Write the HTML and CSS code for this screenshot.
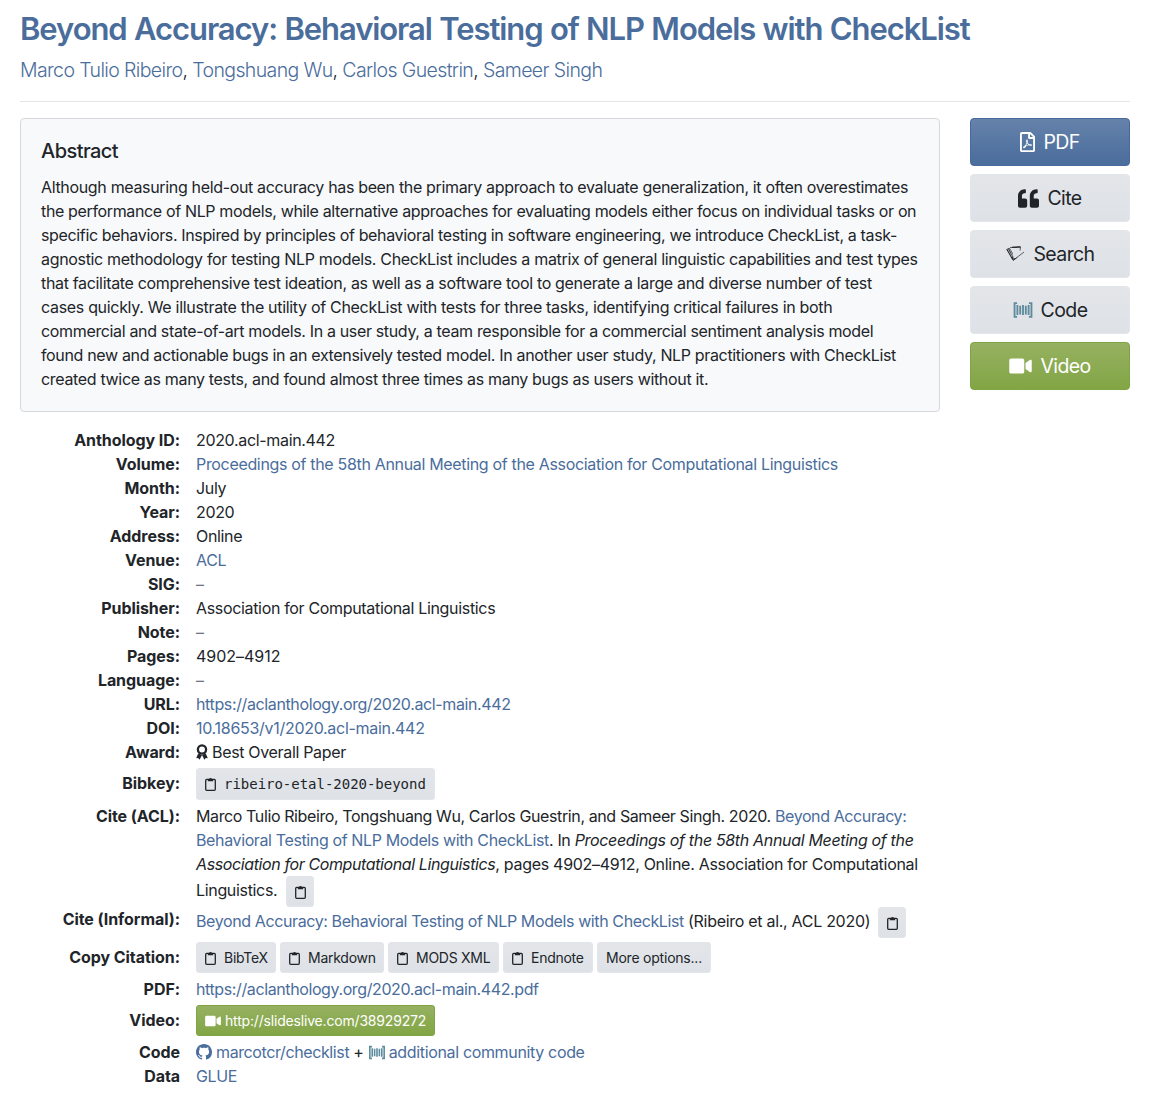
FILE: index.html
```
<!DOCTYPE html>
<html lang="en">
<head>
<meta charset="utf-8">
<title>Beyond Accuracy: Behavioral Testing of NLP Models with CheckList - ACL Anthology</title>
<link rel="stylesheet" href="styles.css">
</head>
<body>
<svg class="sprite" aria-hidden="true">
<symbol id="clip" viewBox="0 0 11 14"><rect x=".7" y="2.400" width="9.600" height="10.900" rx="1" fill="none" stroke="currentColor" stroke-width="1.300"/><path d="M2.800 4.300V2.500h1.100a1.600 1.600 0 0 1 3.200 0h1.100v1.800z"/></symbol>
<symbol id="pdf" viewBox="0 0 384 512"><path d="M369.9 97.900L286 14C277 5 264.800-.1 252.100-.1H48C21.500 0 0 21.500 0 48v416c0 26.500 21.500 48 48 48h288c26.500 0 48-21.500 48-48V131.900c0-12.700-5.100-25-14.100-34zM332.100 128H256V51.900l76.100 76.100zM48 464V48h160v104c0 13.300 10.700 24 24 24h104v288H48zm250.200-143.700c-12.200-12-47-8.700-64.400-6.500-17.200-10.500-28.700-25-36.800-46.300 3.900-16.100 10.100-40.600 5.400-56-4.200-26.200-37.800-23.600-42.600-5.900-4.400 16.100-.4 38.500 7 67.100-10 23.900-24.900 56-35.400 74.400-20 10.300-47 26.200-51 46.200-3.300 15.800 26 55.200 76.100-31.200 22.400-7.400 46.800-16.500 68.400-20.100 18.900 10.200 41 17 55.800 17 25.500 0 28-28.200 17.500-38.700zm-198.100 77.800c5.100-13.700 24.500-29.500 30.400-35-19 30.300-30.400 35.700-30.400 35zm81.600-190.600c7.400 0 6.700 32.100 1.800 40.800-4.400-13.900-4.300-40.800-1.800-40.800zm-24.400 136.600c9.700-16.900 18-37 24.700-54.700 8.300 15.100 18.900 27.200 30.100 35.500-20.800 4.300-38.900 13.100-54.800 19.200zm131.600-5s-5 6-37.300-7.800c35.100-2.600 40.900 5.400 37.300 7.800z"/></symbol>
<symbol id="quote" viewBox="0 0 512 512"><path d="M464 256h-80v-64c0-35.300 28.700-64 64-64h8c13.300 0 24-10.700 24-24V56c0-13.300-10.700-24-24-24h-8c-88.400 0-160 71.600-160 160v240c0 26.500 21.500 48 48 48h128c26.500 0 48-21.500 48-48V304c0-26.500-21.500-48-48-48zm-288 0H96v-64c0-35.300 28.700-64 64-64h8c13.300 0 24-10.700 24-24V56c0-13.300-10.700-24-24-24h-8C71.600 32 0 103.600 0 192v240c0 26.500 21.500 48 48 48h128c26.500 0 48-21.500 48-48V304c0-26.500-21.500-48-48-48z"/></symbol>
<symbol id="video" viewBox="0 0 576 512"><path d="M336.200 64H47.800C21.400 64 0 85.400 0 111.800v288.400C0 426.600 21.400 448 47.800 448h288.400c26.400 0 47.800-21.400 47.800-47.800V111.800c0-26.400-21.400-47.800-47.800-47.800zm189.400 37.700L416 177.300v157.400l109.600 75.500c21.200 14.600 50.400-.3 50.400-25.800V127.500c0-25.400-29.100-40.400-50.400-25.800z"/></symbol>
<symbol id="pwc" viewBox="0 0 512 512"><path d="M88 128h48v256H88zM232 128h48v256h-48zM160 144h48v224h-48zM304 144h48v224h-48zM376 128h48v256h-48zM104 104V56H16v400h88v-48H64V104zM408 56v48h40v304h-40v48h88V56z"/></symbol>
<symbol id="github" viewBox="0 0 16 16"><path d="M8 0C3.580 0 0 3.580 0 8c0 3.540 2.290 6.530 5.470 7.590.4.070.55-.17.55-.38 0-.19-.01-.82-.01-1.490-2.010.37-2.530-.49-2.690-.94-.09-.23-.48-.94-.82-1.130-.28-.15-.68-.52-.01-.53.63-.01 1.080.58 1.230.82.72 1.210 1.870.87 2.330.66.07-.52.28-.87.51-1.070-1.780-.2-3.640-.89-3.640-3.950 0-.87.31-1.590.82-2.150-.08-.2-.36-1.020.08-2.120 0 0 .67-.21 2.200.82.64-.18 1.320-.27 2-.27s1.360.09 2 .27c1.530-1.040 2.200-.82 2.200-.82.44 1.100.16 1.920.08 2.120.51.56.82 1.270.82 2.150 0 3.070-1.870 3.750-3.650 3.950.29.25.54.73.54 1.480 0 1.070-.01 1.930-.01 2.200 0 .21.15.46.55.38A8.010 8.010 0 0 0 16 8c0-4.420-3.580-8-8-8z"/></symbol>
<symbol id="award" viewBox="0 0 12 16"><circle cx="6" cy="5.500" r="4.100" fill="none" stroke="currentColor" stroke-width="2.300"/><path d="M2.200 9.500L.2 14.200l2-.1L3.600 15.800 6 11l2.400 4.800 1.400-1.700 2 .1-2-4.700L6 11z"/></symbol>
<symbol id="scholar" viewBox="0 0 20 18"><path d="M5 2.500L15.500 2 15 5.500M19 7L8 15.500" fill="none" stroke="currentColor" stroke-width=".7"/><path d="M7 1.800l8.400-.5v1.200L7 3zM1.200 4.200L4.700 2.700l2.800 5L9 16 7.100 14.500zM8 15.800l5-3.500-4 1.200z"/><path d="M2.800 4.200l4.500 8M4.400 3.500L8 11" stroke="#e2e5e9" stroke-width=".7"/></symbol>
</svg>
<main>
<h2><a href="#">Beyond Accuracy: Behavioral Testing of NLP Models with CheckList</a></h2>
<p class="authors"><a href="#">Marco Tulio Ribeiro</a>, <a href="#">Tongshuang Wu</a>, <a href="#">Carlos Guestrin</a>, <a href="#">Sameer Singh</a></p>
<hr>
<div class="columns">
<div class="details">
<section class="abstract">
<h5>Abstract</h5>
<p><span>Although measuring held-out accuracy has been the primary approach to evaluate generalization, it often overestimates</span>
<span>the performance of NLP models, while alternative approaches for evaluating models either focus on individual tasks or on</span>
<span>specific behaviors. Inspired by principles of behavioral testing in software engineering, we introduce CheckList, a task-</span>
<span>agnostic methodology for testing NLP models. CheckList includes a matrix of general linguistic capabilities and test types</span>
<span>that facilitate comprehensive test ideation, as well as a software tool to generate a large and diverse number of test</span>
<span>cases quickly. We illustrate the utility of CheckList with tests for three tasks, identifying critical failures in both</span>
<span>commercial and state-of-art models. In a user study, a team responsible for a commercial sentiment analysis model</span>
<span>found new and actionable bugs in an extensively tested model. In another user study, NLP practitioners with CheckList</span>
<span>created twice as many tests, and found almost three times as many bugs as users without it.</span></p>
</section>
<dl>
<dt>Anthology ID:</dt><dd>2020.acl-main.442</dd>
<dt>Volume:</dt><dd><a href="#">Proceedings of the 58th Annual Meeting of the Association for Computational Linguistics</a></dd>
<dt>Month:</dt><dd>July</dd>
<dt>Year:</dt><dd>2020</dd>
<dt>Address:</dt><dd>Online</dd>
<dt>Venue:</dt><dd><a href="#">ACL</a></dd>
<dt>SIG:</dt><dd class="muted">–</dd>
<dt>Publisher:</dt><dd>Association for Computational Linguistics</dd>
<dt>Note:</dt><dd class="muted">–</dd>
<dt>Pages:</dt><dd class="pages">4902–4912</dd>
<dt>Language:</dt><dd class="muted">–</dd>
<dt>URL:</dt><dd><a class="tight" href="#">https://aclanthology.org/2020.acl-main.442</a></dd>
<dt>DOI:</dt><dd><a class="loose" href="#">10.18653/v1/2020.acl-main.442</a></dd>
<dt>Award:</dt><dd><svg class="i-award"><use href="#award"/></svg>Best Overall Paper</dd>
<dt class="key">Bibkey:</dt><dd class="bibkey"><button class="sm mono"><svg class="i-clip"><use href="#clip"/></svg>ribeiro-etal-2020-beyond</button></dd>
<dt>Cite (ACL):</dt><dd class="cite"><div class="tighter">Marco Tulio Ribeiro, Tongshuang Wu, Carlos Guestrin, and Sameer Singh. 2020. <a href="#">Beyond Accuracy:</a></div><div><a class="tight" href="#">Behavioral Testing of NLP Models with CheckList</a>. In <i>Proceedings of the 58th Annual Meeting of the</i></div><div><i class="tighter">Association for Computational Linguistics</i><span class="loose">, pages 4902–4912, Online. Association for Computational</span></div><div class="with-btn"><span>Linguistics.</span><button class="sm only"><svg class="i-clip"><use href="#clip"/></svg></button></div></dd>
<dt>Cite (Informal):</dt><dd class="with-btn informal"><span><a class="tighter" href="#">Beyond Accuracy: Behavioral Testing of NLP Models with CheckList</a> <span class="loose">(Ribeiro et al., ACL 2020)</span></span><button class="sm only"><svg class="i-clip"><use href="#clip"/></svg></button></dd>
<dt class="key">Copy Citation:</dt><dd class="copy"><button class="sm w80"><svg class="i-clip"><use href="#clip"/></svg>BibTeX</button><button class="sm w104"><svg class="i-clip"><use href="#clip"/></svg>Markdown</button><button class="sm w111"><svg class="i-clip"><use href="#clip"/></svg>MODS XML</button><button class="sm w90"><svg class="i-clip"><use href="#clip"/></svg>Endnote</button><button class="sm w114">More options...</button></dd>
<dt>PDF:</dt><dd><a class="tighter" href="#">https://aclanthology.org/2020.acl-main.442.pdf</a></dd>
<dt class="key">Video:</dt><dd class="vid"><button class="sm green"><svg class="i-video"><use href="#video"/></svg>http://slideslive.com/38929272</button></dd>
<dt>Code</dt><dd class="tighter"><a href="#"><svg class="i-github"><use href="#github"/></svg>marcotcr/checklist</a> + <a href="#"><svg class="i-pwc"><use href="#pwc"/></svg><span class="community">additional community code</span></a></dd>
<dt>Data</dt><dd><a class="tighter" href="#">GLUE</a></dd>
</dl>
</div>
<aside>
<a class="btn blue" href="#"><svg class="b-pdf"><use href="#pdf"/></svg>PDF</a>
<a class="btn" href="#"><svg class="b-quote"><use href="#quote"/></svg>Cite</a>
<a class="btn" href="#"><svg class="b-scholar"><use href="#scholar"/></svg>Search</a>
<a class="btn" href="#"><svg class="b-pwc"><use href="#pwc"/></svg>Code</a>
<a class="btn green" href="#"><svg class="b-video"><use href="#video"/></svg>Video</a>
</aside>
</div>
</main>
</body>
</html>
```
FILE: styles.css
```
* { box-sizing: border-box; }
body { margin: 0; background: #fff; color: #212529; font: 400 16px/24px Inter, sans-serif; letter-spacing: -0.33px; }
main { width: 1110px; margin-left: 20px; padding-top: 10px; }
.sprite { display: none; }
svg { fill: currentColor; flex: none; }
a { color: #4a6d9c; text-decoration: none; }
h2 { margin: 0 0 7px; font-size: 31px; line-height: 38px; font-weight: 600; letter-spacing: -1.07px; word-spacing: 0.65px; white-space: nowrap; }
.authors { margin: 0; font-size: 19.5px; line-height: 30px; font-weight: 330; letter-spacing: -0.62px; }
hr { margin: 16px 0; border: 0; border-top: 1px solid #e5e5e5; }
.columns { display: flex; justify-content: space-between; align-items: flex-start; }
.details { width: 920px; }

.abstract { height: 294px; padding: 20px; border: 1px solid #d6d8db; border-radius: 4px; background: #f8f9fb; }
h5 { margin: 0 0 12px; font-size: 20px; line-height: 24px; font-weight: 500; letter-spacing: -0.55px; }
.abstract p { margin: 0; }
.abstract span { display: block; white-space: nowrap; }
.abstract span:nth-child(1) { letter-spacing: -0.338px; }
.abstract span:nth-child(2), .abstract span:nth-child(3) { letter-spacing: -0.355px; }
.abstract span:nth-child(6) { letter-spacing: -0.312px; }
.abstract span:nth-child(7), .abstract span:nth-child(8) { letter-spacing: -0.343px; }

dl { display: grid; grid-template-columns: 160px 1fr; column-gap: 16px; margin: 16px 0 0; }
dt { text-align: right; font-weight: 700; letter-spacing: -0.06px; }
dd { margin: 0; white-space: nowrap; }
.muted { color: #6c757d; }
.pages { letter-spacing: -0.03px; }
.tight { letter-spacing: -0.375px; }
.tighter { letter-spacing: -0.39px; }
.loose { letter-spacing: -0.29px; }
.community { letter-spacing: -0.34px; }

button, .btn { font-family: inherit; border: 1px solid #e2e5e9; border-radius: 4px; background: #e2e6ea linear-gradient(180deg, #e3e5e9, #dee2e6); color: #212529; }
.sm { display: inline-flex; align-items: center; height: 31px; padding: 0 8px; border-radius: 3px; font-size: 14px; line-height: 21px; letter-spacing: -0.26px; white-space: nowrap; }
.mono { width: 239px; height: 32px; font-family: "DejaVu Sans Mono", monospace; letter-spacing: -0.02px; }
.only { width: 28px; justify-content: center; padding: 0; }
.i-clip { width: 11px; height: 14px; }
.mono .i-clip, .copy .i-clip { margin-right: 8px; }
.key { padding-top: 7px; }
.bibkey { display: flex; height: 40px; padding-top: 4px; }
.with-btn { display: flex; }
.with-btn > span { padding-top: 2px; }
.with-btn button { margin-left: 8px; }
.cite .with-btn { height: 31px; }
.cite .with-btn button { margin-left: 9px; }
.informal { height: 31px; }
.copy { display: flex; gap: 4px; height: 39px; padding-top: 4px; }
.w80 { width: 80px; }
.w104 { width: 104px; }
.w111 { width: 111px; }
.w90 { width: 90px; }
.w114 { width: 114px; letter-spacing: -0.22px; }
.vid { display: flex; height: 39px; padding-top: 4px; }
.green, .btn.green { border-color: #80a445; background: #82a54a linear-gradient(180deg, #96b161, #82a545); color: #fff; }
.sm.green { width: 239px; letter-spacing: -0.18px; }
.i-video { width: 16px; height: 14px; margin-right: 4px; }
.i-award { width: 12px; height: 16px; margin-right: 4px; vertical-align: -2px; }
.i-github { width: 16px; height: 16px; margin-right: 4px; vertical-align: -2px; }
.i-pwc { width: 18px; height: 17px; margin-right: 3px; vertical-align: -3px; color: #5f8b9e; }

aside { display: flex; flex-direction: column; gap: 8px; width: 160px; }
.btn { display: flex; align-items: center; justify-content: center; height: 48px; font-size: 19.5px; line-height: 30px; letter-spacing: -0.6px; }
.btn svg { margin-right: 8px; }
.blue { border-color: #466a9b; background: #4a6d9c linear-gradient(180deg, #6582aa, #4a6d9c); color: #fff; }
.b-pdf { width: 15px; height: 20px; }
.b-quote { width: 21px; height: 21px; }
.b-scholar { width: 20px; height: 18px; }
.b-pwc { width: 20px; height: 20px; color: #5f8b9e; }
.b-video { width: 23px; height: 20px; }
```
